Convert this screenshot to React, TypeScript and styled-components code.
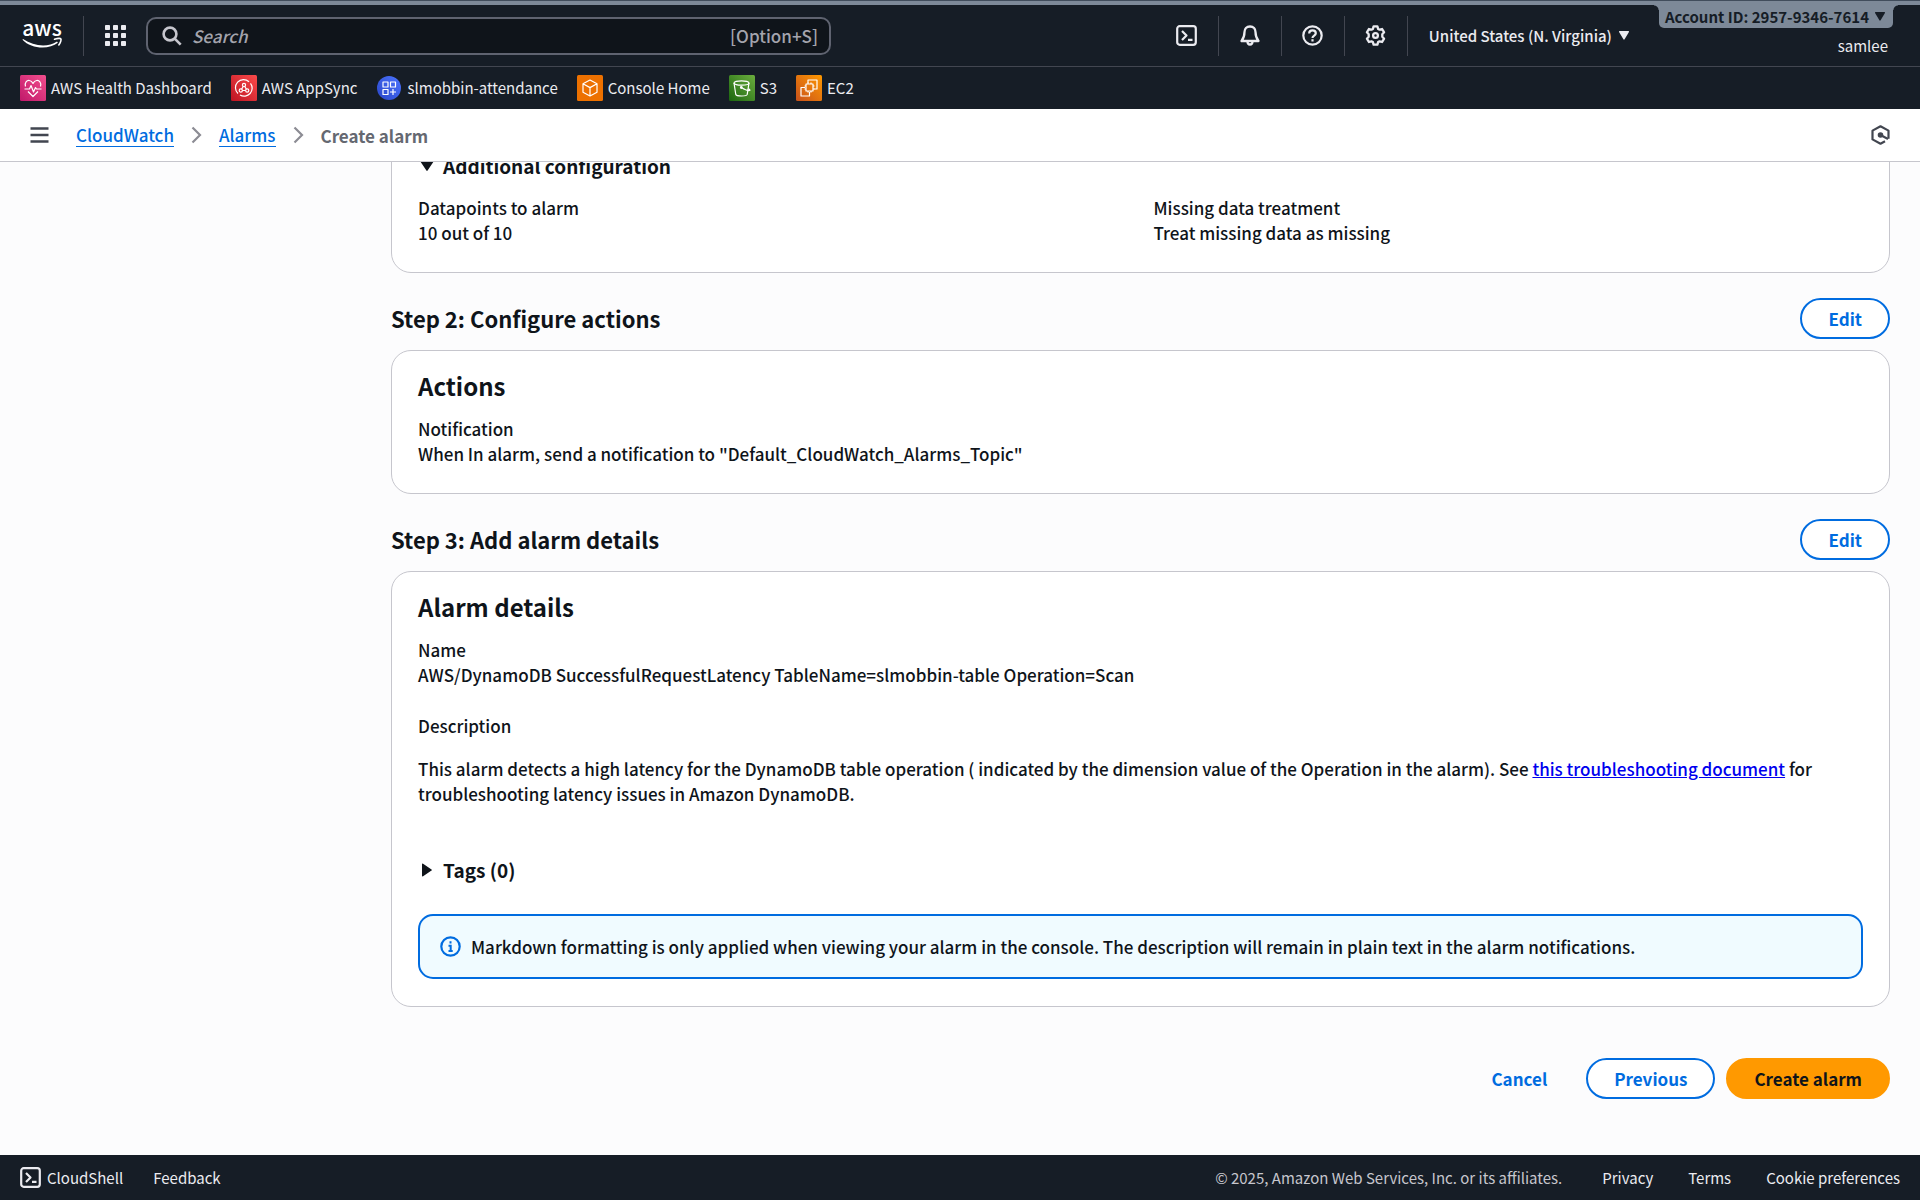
import React, { ReactNode } from "react";
import styled, { createGlobalStyle, css } from "styled-components";

const FONT = `"Noto Sans CJK SC", "Noto Sans", sans-serif`;
const c = {
  ink: "#0f141a",
  nav: "#161d26",
  navText: "#ebebf0",
  navLine: "#424650",
  accent: "#7d8998",
  blue: "#006ce0",
  line: "#c6c6cd",
  page: "#fcfcfd",
};

const GlobalStyle = createGlobalStyle`
  *, *::before, *::after { box-sizing: border-box; }
  body { margin: 0; background: ${c.page}; color: ${c.ink}; font: 500 17px/25px ${FONT}; }
  button, input { font: inherit; color: inherit; }
  h1, h2, h3, p, dl, dt, dd, ol, ul { margin: 0; padding: 0; font-weight: inherit; }
  svg { display: block; flex: none; overflow: visible; }
`;

const Shell = styled.div`
  height: 100vh;
  display: flex;
  flex-direction: column;
`;

/* Global navigation */

const Header = styled.header`
  flex: none;
  background: ${c.nav};
  color: ${c.navText};
  font-size: 15px;
  font-weight: 400;
  border-top: 1px solid #414d5c;
`;

const AccentStrip = styled.div`
  height: 4px;
  background: ${c.accent};
`;

const TopRow = styled.div`
  display: flex;
  align-items: center;
  height: 62px;
  padding: 0 27px 0 0;
  border-bottom: 1px solid ${c.navLine};
`;

const PlainButton = styled.button`
  display: flex;
  align-items: center;
  justify-content: center;
  border: 0;
  padding: 0;
  background: none;
  cursor: pointer;
  white-space: nowrap;
`;

const LogoLink = styled.a`
  display: flex;
  align-items: center;
  justify-content: flex-end;
  width: 84px;
  height: 40px;
  padding-right: 21px;
  border-right: 1px solid ${c.navLine};
`;

const AppsButton = styled(PlainButton)`
  width: 62px;
  height: 40px;
`;

const SearchBox = styled.label`
  flex: 0 1 685px;
  display: flex;
  align-items: center;
  gap: 10px;
  height: 38px;
  padding: 0 11px 0 14px;
  border: 2px solid #5f6370;
  border-radius: 10px;
  background: ${c.ink};
  color: #b4b4bb;
  font-size: 17px;
  font-weight: 500;
`;

const SearchInput = styled.input`
  flex: 1;
  min-width: 0;
  border: 0;
  padding: 0;
  outline: 0;
  background: none;
  &::placeholder { color: #a4a4ad; font-style: italic; opacity: 1; }
`;

const Shortcut = styled.span`
  color: #a4a4ad;
`;

const Tools = styled.div`
  display: flex;
  align-items: center;
  margin-left: auto;
`;

const ToolButton = styled(PlainButton)`
  width: 63px;
  height: 40px;
  border-right: 1px solid ${c.navLine};
`;

const RegionButton = styled(PlainButton)`
  gap: 7px;
  padding: 0 30px 0 21px;
  font-weight: 500;
`;

const Account = styled.div`
  align-self: flex-start;
  display: flex;
  flex-direction: column;
  align-items: flex-end;
  gap: 5px;
`;

const AccountTab = styled(PlainButton)`
  position: relative;
  height: 23px;
  gap: 6px;
  padding: 0 8px 0 6px;
  border-radius: 0 0 5px 5px;
  background: ${c.accent};
  color: ${c.nav};
  font-weight: 700;
  &::before, &::after {
    content: "";
    position: absolute;
    top: 0;
    width: 5px;
    height: 5px;
  }
  &::before {
    right: 100%;
    background: radial-gradient(circle at 0 100%, transparent 4px, ${c.accent} 5px);
  }
  &::after {
    left: 100%;
    background: radial-gradient(circle at 100% 100%, transparent 4px, ${c.accent} 5px);
  }
`;

const UserName = styled.span`
  padding-right: 5px;
`;

const Favorites = styled.nav`
  display: flex;
  align-items: center;
  gap: 19px;
  height: 42px;
  padding: 0 20px 1px;
`;

const Favorite = styled.a`
  display: flex;
  align-items: center;
  gap: 5px;
  color: inherit;
  text-decoration: none;
`;

/* Breadcrumb bar */

const CrumbBar = styled.nav`
  flex: none;
  display: flex;
  align-items: center;
  gap: 27px;
  height: 53px;
  padding: 0 30px;
  background: #fff;
  border-bottom: 1px solid ${c.line};
  color: #424650;
`;

const Crumbs = styled.ol`
  flex: 1;
  display: flex;
  align-items: center;
  gap: 17px;
  list-style: none;
`;

const Crumb = styled.li<{ $current?: boolean }>`
  display: flex;
  align-items: center;
  gap: 17px;
  color: #656871;
  ${(p) => p.$current && css`font-weight: 700;`}
  a {
    color: ${c.blue};
    line-height: 23px;
    text-decoration: none;
    border-bottom: 1px solid ${c.blue};
  }
`;

/* Review content */

const Main = styled.main`
  flex: 1;
  min-height: 0;
  overflow: hidden;
  display: flex;
  flex-direction: column;
  justify-content: flex-end;
  padding: 0 30px 56px 391px;
`;

const Card = styled.section`
  flex: none;
  padding: 20px 26px 27px;
  border: 1px solid ${c.line};
  border-radius: 20px;
  background: #fff;
`;

const StepHeader = styled.div`
  flex: none;
  display: flex;
  align-items: center;
  justify-content: space-between;
  padding: 25px 0 11px;
`;

const StepTitle = styled.h2`
  padding-bottom: 2px;
  font-size: 22px;
  line-height: 30px;
  font-weight: 700;
`;

const CardTitle = styled.h3`
  margin-bottom: 15px;
  font-size: 24px;
  line-height: 30px;
  font-weight: 700;
`;

const Expander = styled(PlainButton)`
  gap: 9px;
  padding-left: 2px;
  font-size: 19px;
  font-weight: 700;
`;

const Details = styled.dl<{ $columns?: number }>`
  display: grid;
  grid-template-columns: repeat(${(p) => p.$columns ?? 1}, 1fr);
  gap: 26px;
`;

const AdditionalDetails = styled(Details)`
  margin-top: 17px;
`;

const Description = styled.p`
  margin-top: 18px;
  padding-bottom: 51px;
  a { color: #0000ee; }
`;

const Alert = styled.div`
  display: flex;
  align-items: center;
  gap: 10px;
  margin-top: 32px;
  padding: 18px 20px;
  border: 2px solid ${c.blue};
  border-radius: 15px;
  background: #f0fbff;
`;

const Actions = styled.div`
  flex: none;
  display: flex;
  justify-content: flex-end;
  gap: 11px;
  margin-top: 51px;
`;

const Button = styled.button<{ $kind?: "normal" | "primary" | "link" }>`
  height: 41px;
  padding: 0 26px;
  border: 2px solid ${c.blue};
  border-radius: 21px;
  background: #fff;
  color: ${c.blue};
  font-weight: 700;
  white-space: nowrap;
  cursor: pointer;
  ${(p) => p.$kind === "primary" && css`border-color: #ff9900; background: #ff9900; color: ${c.ink};`}
  ${(p) => p.$kind === "link" && css`border-color: transparent; background: transparent;`}
`;

/* Footer */

const Footer = styled.footer`
  flex: none;
  display: flex;
  align-items: center;
  height: 45px;
  padding: 0 20px;
  background: ${c.nav};
  color: ${c.navText};
  font-size: 15px;
  font-weight: 400;
  a { color: inherit; text-decoration: none; }
`;

const FooterShell = styled(PlainButton)`
  gap: 6px;
  margin-right: 30px;
`;

const Legal = styled.div`
  display: flex;
  gap: 35px;
  margin-left: auto;
`;

const Copyright = styled.span`
  margin-right: 5px;
  color: #c6c6cd;
`;

/* Drawings */

const AwsLogo = () => (
  <svg width="40" height="40" viewBox="0 0 40 40" fill="none">
    <text x="20" y="20" textAnchor="middle" fontFamily="Noto Sans CJK SC, sans-serif" fontWeight="500" fontSize="21" fill="#fff">aws</text>
    <path d="M1 23c11 7.500 25 8.500 34 2.500l.9 1.200C27 34 9 33 .5 23.700z" fill="#fff" />
    <path d="M32.500 23.300c3-1 6-1 6.400-.3.500.9-.4 4-2.100 6" stroke="#fff" strokeWidth="1.600" strokeLinecap="round" strokeLinejoin="round" />
  </svg>
);

const GridIcon = () => (
  <svg width="21" height="21" viewBox="0 0 21 21" fill={c.navText}>
    {[0, 8, 16].map((y) => [0, 8, 16].map((x) => <rect key={`${x}-${y}`} x={x} y={y} width="5" height="5" rx=".8" />))}
  </svg>
);

const SearchIcon = () => (
  <svg width="20" height="20" viewBox="0 0 20 20" fill="none" stroke="#c6c6cd" strokeWidth="2.600">
    <circle cx="8" cy="8" r="6.400" />
    <path d="M12.700 12.700l6 6" />
  </svg>
);

const ShellIcon = () => (
  <svg width="21" height="21" viewBox="0 0 21 21" fill="none" stroke={c.navText} strokeWidth="2.200" strokeLinejoin="round">
    <rect x="1.200" y="1.200" width="18.600" height="18.600" rx="2.500" />
    <path d="M6 6l4.500 4.500L6 15M12 14.800h4.500" />
  </svg>
);

const BellIcon = () => (
  <svg width="20" height="21" viewBox="0 0 20 21" fill="none" stroke={c.navText} strokeWidth="2.300" strokeLinejoin="round">
    <path d="M10 1.500c-3.500 0-5.500 2.500-5.500 5.500 0 5-1 6.500-3 9h17c-2-2.500-3-4-3-9 0-3-2-5.500-5.500-5.500z" />
    <path d="M7.500 16.500c0 4 5 4 5 0" />
  </svg>
);

const HelpIcon = () => (
  <svg width="21" height="21" viewBox="0 0 21 21" fill="none" stroke={c.navText} strokeWidth="2.200">
    <circle cx="10.500" cy="10.500" r="9.200" />
    <path d="M7.200 8.500c0-2 1.400-3.100 3.300-3.100s3.300 1.100 3.300 2.900c0 2.300-3.300 2.200-3.300 4.700" />
    <path d="M10.500 14.200v2.300" />
  </svg>
);

const GearIcon = () => (
  <svg width="21" height="21" viewBox="0 0 21 21" fill="none" stroke={c.navText} strokeWidth="2.300" strokeLinejoin="round">
    <path d="M8.600 1.400h3.800l.7 2.500 1.500.8 2.500-.7 2 3.300-1.800 1.900v2.600l1.800 1.900-2 3.300-2.500-.7-1.500.8-.7 2.500H8.600l-.7-2.500-1.500-.8-2.500.7-2-3.300 1.800-1.900V9.200L1.900 7.300l2-3.300 2.500.7 1.500-.8z" />
    <circle cx="10.500" cy="10.500" r="2.400" />
  </svg>
);

const CaretDown = () => (
  <svg width="10" height="9" viewBox="0 0 10 9" fill="currentColor">
    <path d="M.8 0h8.400c.7 0 1 .6.600 1.200L5.600 8.300c-.3.500-.9.500-1.200 0L.2 1.200C-.2.600.1 0 .8 0z" />
  </svg>
);

const ExpandCaret = ({ open }: { open?: boolean }) => (
  <svg width="14" height="14" viewBox="0 0 14 14" fill={c.ink}>
    {open
      ? <path d="M1.300 2h11.400c.7 0 1 .6.600 1.100L7.600 11.500c-.3.500-.9.500-1.200 0L.7 3.100C.3 2.600.6 2 1.300 2z" />
      : <path d="M2 1.300v11.400c0 .7.600 1 1.100.6l8.400-5.700c.5-.3.500-.9 0-1.200L3.100.7C2.600.3 2 .6 2 1.300z" />}
  </svg>
);

const Separator = () => (
  <svg width="11" height="18" viewBox="0 0 11 18" fill="none" stroke="#8c8c94" strokeWidth="2.200">
    <path d="M1.500 1.500L9 9l-7.500 7.500" />
  </svg>
);

const MenuIcon = () => (
  <svg width="19" height="16" viewBox="0 0 19 16" stroke="#424650" strokeWidth="2.400">
    <path d="M.5 1.500h18M.5 8h18M.5 14.500h18" />
  </svg>
);

const HexIcon = () => (
  <svg width="19" height="20" viewBox="0 0 19 20" fill="none" stroke="#424650" strokeWidth="2.200" strokeLinejoin="round">
    <path d="M17.500 13.700V5.600L9.500 1.300l-8 4.300v8.800l8 4.300 4.500-2.400" />
    <path d="M9.500 10l7.500 4" />
    <circle cx="9.500" cy="10" r="1.700" fill="#424650" />
  </svg>
);

const InfoIcon = () => (
  <svg width="21" height="21" viewBox="0 0 21 21" fill="none" stroke={c.blue} strokeWidth="2.200">
    <circle cx="10.500" cy="10.500" r="9.200" />
    <path d="M10.500 5.300v2.300M8.500 9.700h2.200v5.300M8.500 15h4.200" strokeWidth="2" />
  </svg>
);

const Tile = ({ from, to, id, round, children }: { from: string; to: string; id: string; round?: boolean; children: ReactNode }) => (
  <svg width="26" height="26" viewBox="0 0 26 26" fill="none" stroke="#fff" strokeWidth="1.200" strokeLinejoin="round">
    <defs>
      <linearGradient id={id} x1="0" y1="1" x2="1" y2="0">
        <stop stopColor={from} />
        <stop offset="1" stopColor={to} />
      </linearGradient>
    </defs>
    {round ? <circle cx="13" cy="13" r="12" fill={`url(#${id})`} stroke="none" /> : <rect width="26" height="26" rx="1.500" fill={`url(#${id})`} stroke="none" />}
    {children}
  </svg>
);

const HealthTile = () => (
  <Tile id="health" from="#c0186a" to="#f34f8e">
    <path d="M5.500 11.500C4.300 7.500 7 5.200 9.300 5.500c1.800.2 2.900 1.300 3.700 2.900.8-1.600 1.900-2.700 3.700-2.900 2.300-.3 5 2 3.800 6M8 16.500l5 5 5-5" />
    <path d="M4.500 14h5l1.500-3.500 2.500 6.500 2-4.500 1 1.500h5" />
  </Tile>
);

const AppSyncTile = () => (
  <Tile id="appsync" from="#bd1422" to="#fb4b4b">
    <path d="M7 18.500A8 8 0 0 1 18 6.800M19.500 8.300A8 8 0 0 1 9 20" />
    <circle cx="13" cy="10" r="1.600" />
    <circle cx="9.800" cy="15.500" r="1.600" />
    <circle cx="16.200" cy="15.500" r="1.600" />
    <path d="M12.200 11.500l-1.600 2.600M13.800 11.500l1.600 2.600M11.400 15.500h3.200" />
  </Tile>
);

const AttendanceTile = () => (
  <Tile id="attendance" from="#2a46c8" to="#4b74ff" round>
    <path d="M7 7h5v5H7zM14.500 7h5v5h-5zM7 14.500h5v5H7zM17 14v6M14 17h6" />
  </Tile>
);

const ConsoleTile = () => (
  <Tile id="console" from="#ed7100" to="#ed7100">
    <path d="M13 5l7 3.800v8.400L13 21l-7-3.800V8.800zM6 8.800l7 3.800 7-3.800M13 12.600V21" />
  </Tile>
);

const S3Tile = () => (
  <Tile id="s3" from="#1b660f" to="#6cae3e">
    <ellipse cx="12.500" cy="8" rx="7.500" ry="2.200" />
    <path d="M5 8l1.800 11.500c.5 2 11 2 11.400 0L20 8M12.500 12.500c3 2 7 3.500 8.500 2.800 0-1-1.200-1.500-2-1.700" />
    <circle cx="12.300" cy="12.500" r=".8" fill="#fff" />
  </Tile>
);

const Ec2Tile = () => (
  <Tile id="ec2" from="#c8511b" to="#ff9900">
    <path d="M12 8V5h9v9h-3M9 12.500H5V21h8.500v-4" />
    <rect x="10" y="9" width="7" height="7" />
    <path d="M12 9V7.500M15 9V7.500M12 17.500V16M15 17.500V16M8.500 11H10M8.500 14H10M17 11h1.500M17 14h1.500" />
  </Tile>
);

const favorites = [
  { label: "AWS Health Dashboard", Icon: HealthTile },
  { label: "AWS AppSync", Icon: AppSyncTile },
  { label: "slmobbin-attendance", Icon: AttendanceTile },
  { label: "Console Home", Icon: ConsoleTile },
  { label: "S3", Icon: S3Tile },
  { label: "EC2", Icon: Ec2Tile },
];

const tools = [
  { label: "CloudShell", Icon: ShellIcon },
  { label: "Notifications", Icon: BellIcon },
  { label: "Help", Icon: HelpIcon },
  { label: "Settings", Icon: GearIcon },
];

const Detail = ({ term, children }: { term: string; children?: ReactNode }) => (
  <div>
    <dt>{term}</dt>
    <dd>{children}</dd>
  </div>
);

const Step = ({ title }: { title: string }) => (
  <StepHeader>
    <StepTitle>{title}</StepTitle>
    <Button type="button">Edit</Button>
  </StepHeader>
);

export default function App() {
  return (
    <Shell>
      <GlobalStyle />
      <Header>
        <AccentStrip />
        <TopRow>
          <LogoLink href="#home" aria-label="AWS home"><AwsLogo /></LogoLink>
          <AppsButton type="button" aria-label="Services"><GridIcon /></AppsButton>
          <SearchBox>
            <SearchIcon />
            <SearchInput type="text" placeholder="Search" aria-label="Search" />
            <Shortcut>[Option+S]</Shortcut>
          </SearchBox>
          <Tools>
            {tools.map(({ label, Icon }) => (
              <ToolButton key={label} type="button" aria-label={label}><Icon /></ToolButton>
            ))}
            <RegionButton type="button">United States (N. Virginia) <CaretDown /></RegionButton>
          </Tools>
          <Account>
            <AccountTab type="button">Account ID: 2957-9346-7614 <CaretDown /></AccountTab>
            <UserName>samlee</UserName>
          </Account>
        </TopRow>
        <Favorites aria-label="Favorites">
          {favorites.map(({ label, Icon }) => (
            <Favorite key={label} href="#favorite"><Icon />{label}</Favorite>
          ))}
        </Favorites>
      </Header>

      <CrumbBar aria-label="Breadcrumbs">
        <PlainButton type="button" aria-label="Open navigation"><MenuIcon /></PlainButton>
        <Crumbs>
          <Crumb><a href="#cloudwatch">CloudWatch</a><Separator /></Crumb>
          <Crumb><a href="#alarms">Alarms</a><Separator /></Crumb>
          <Crumb $current>Create alarm</Crumb>
        </Crumbs>
        <PlainButton type="button" aria-label="Open assistant"><HexIcon /></PlainButton>
      </CrumbBar>

      <Main>
        <Card>
          <Expander type="button" aria-expanded="true"><ExpandCaret open />Additional configuration</Expander>
          <AdditionalDetails $columns={2}>
            <Detail term="Datapoints to alarm">10 out of 10</Detail>
            <Detail term="Missing data treatment">Treat missing data as missing</Detail>
          </AdditionalDetails>
        </Card>

        <Step title="Step 2: Configure actions" />
        <Card>
          <CardTitle>Actions</CardTitle>
          <Details>
            <Detail term="Notification">When In alarm, send a notification to "Default_CloudWatch_Alarms_Topic"</Detail>
          </Details>
        </Card>

        <Step title="Step 3: Add alarm details" />
        <Card>
          <CardTitle>Alarm details</CardTitle>
          <Details>
            <Detail term="Name">AWS/DynamoDB SuccessfulRequestLatency TableName=slmobbin-table Operation=Scan</Detail>
            <Detail term="Description">
              <Description>
                This alarm detects a high latency for the DynamoDB table operation ( indicated by the dimension value of the
                Operation in the alarm). See <a href="#troubleshooting">this troubleshooting document</a> for troubleshooting
                latency issues in Amazon DynamoDB.
              </Description>
            </Detail>
          </Details>
          <Expander type="button" aria-expanded="false"><ExpandCaret />Tags (0)</Expander>
          <Alert role="status">
            <InfoIcon />
            <span>
              Markdown formatting is only applied when viewing your alarm in the console. The description will remain in
              plain text in the alarm notifications.
            </span>
          </Alert>
        </Card>

        <Actions>
          <Button type="button" $kind="link">Cancel</Button>
          <Button type="button">Previous</Button>
          <Button type="button" $kind="primary">Create alarm</Button>
        </Actions>
      </Main>

      <Footer>
        <FooterShell type="button"><ShellIcon />CloudShell</FooterShell>
        <a href="#feedback">Feedback</a>
        <Legal>
          <Copyright>© 2025, Amazon Web Services, Inc. or its affiliates.</Copyright>
          <a href="#privacy">Privacy</a>
          <a href="#terms">Terms</a>
          <a href="#cookies">Cookie preferences</a>
        </Legal>
      </Footer>
    </Shell>
  );
}
